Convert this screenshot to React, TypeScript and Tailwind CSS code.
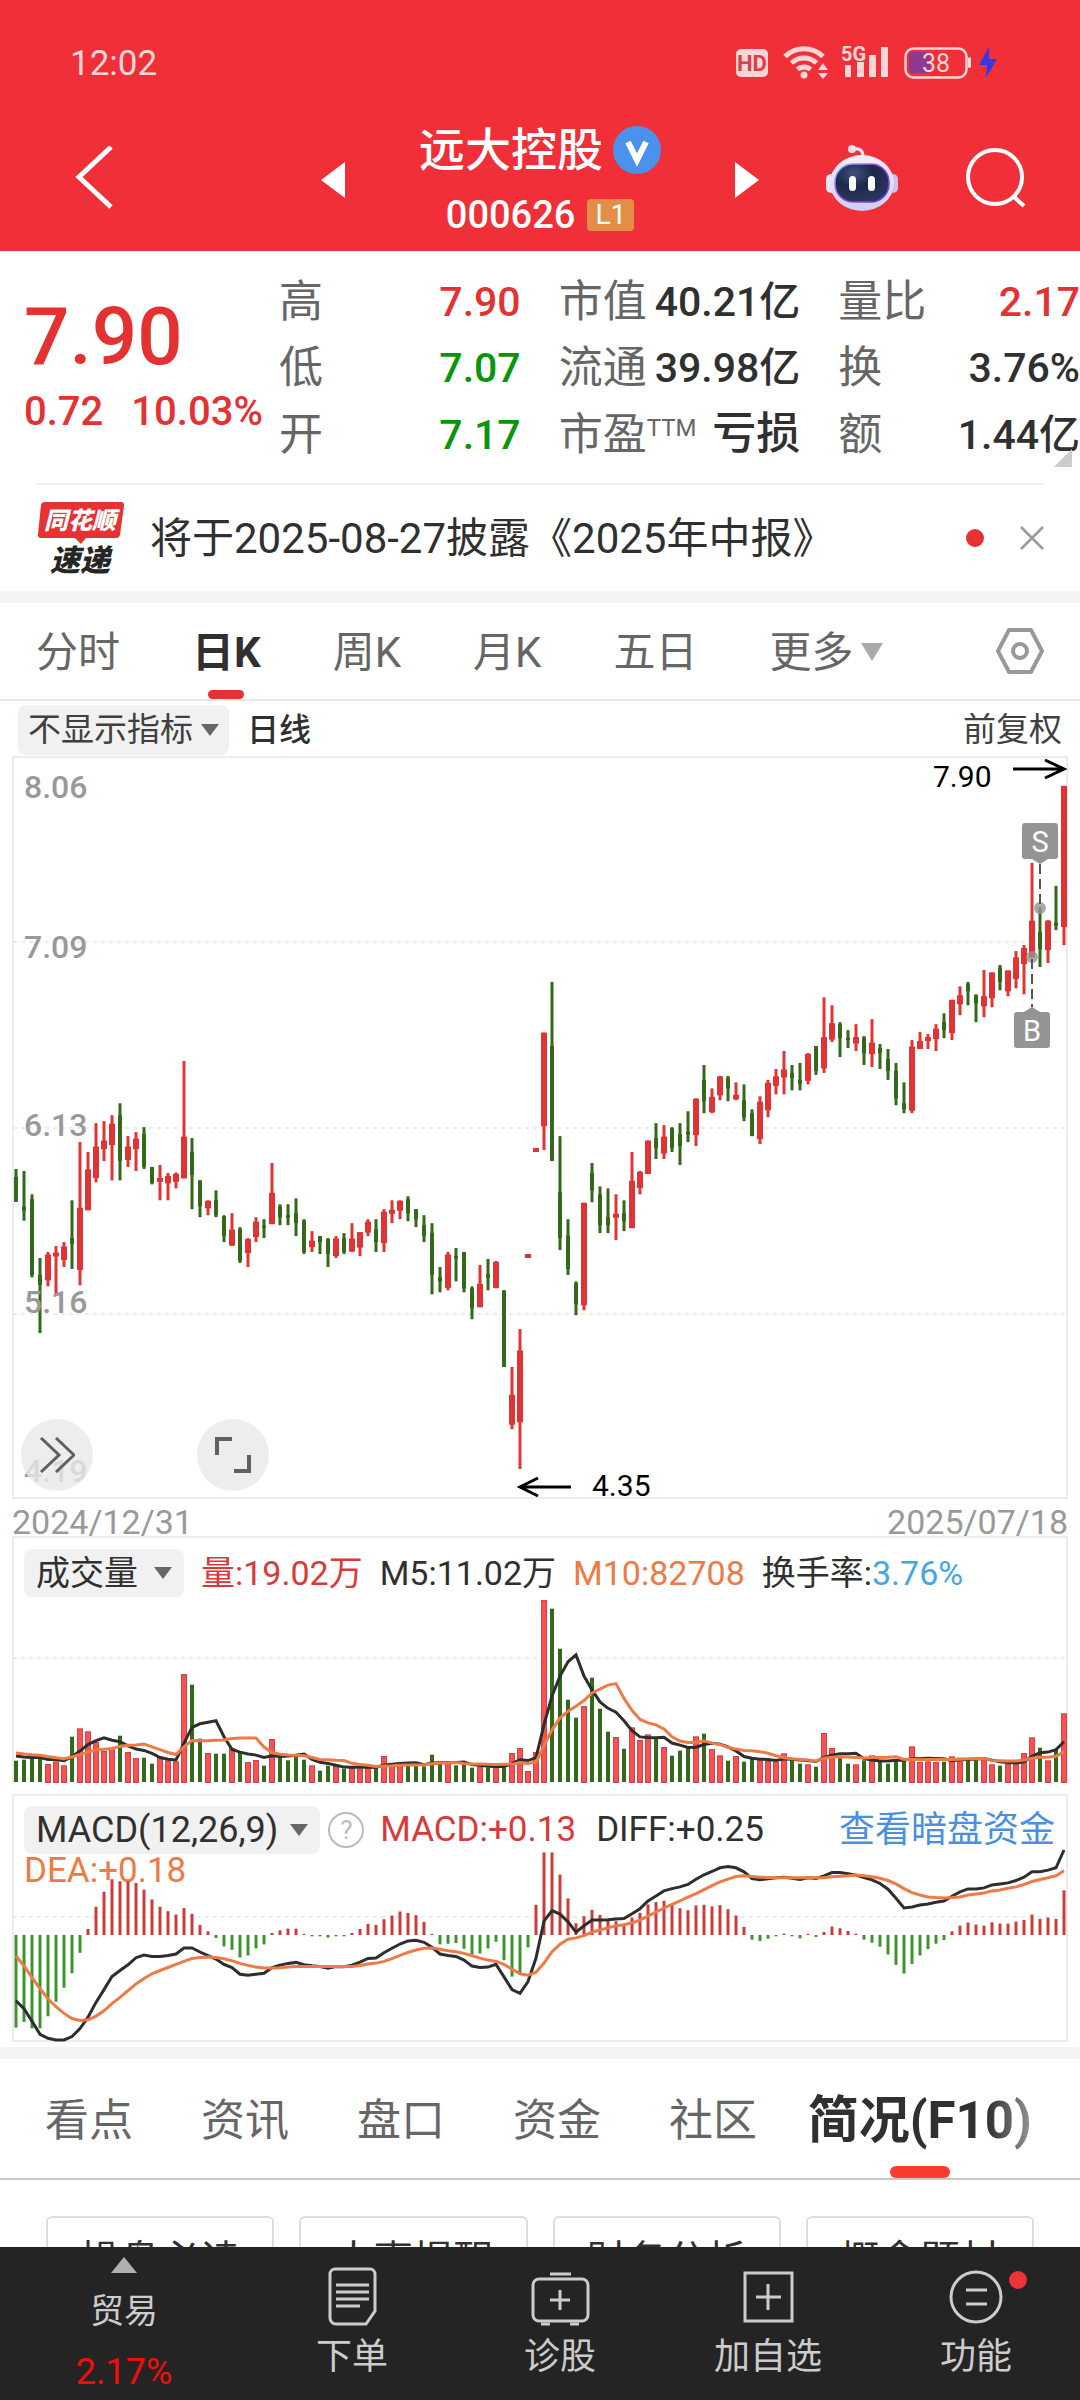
import type { ReactNode } from "react";

// [up, high, bodyTop, bodyBottom, low], measured down from the top of the plot
type Candle = [number, number, number, number, number];

const candles: Candle[] = [
  [0, 862, 878, 928, 928], [0, 866, 938, 946, 966], [0, 913, 923, 1075, 1080], [0, 1041, 1075, 1095, 1192],
  [1, 1029, 1034, 1086, 1098], [1, 1017, 1030, 1038, 1113], [1, 1009, 1018, 1045, 1059], [0, 925, 1001, 1013, 1063],
  [1, 808, 940, 1065, 1096], [1, 828, 863, 945, 945], [1, 770, 817, 880, 889], [1, 766, 805, 822, 846],
  [1, 754, 771, 814, 885], [0, 730, 754, 846, 885], [1, 796, 817, 844, 858], [1, 788, 801, 822, 866],
  [0, 778, 792, 858, 862], [0, 858, 858, 890, 893], [1, 854, 880, 888, 925], [1, 870, 876, 891, 925],
  [1, 869, 872, 888, 901], [1, 645, 797, 881, 881], [0, 800, 828, 874, 943], [0, 885, 885, 937, 959],
  [1, 925, 926, 941, 955], [0, 905, 925, 955, 959], [0, 955, 957, 997, 1009], [1, 951, 984, 1016, 1017],
  [0, 979, 983, 1047, 1051], [1, 1001, 1003, 1031, 1059], [1, 959, 968, 999, 1009], [0, 963, 976, 980, 1001],
  [1, 850, 910, 973, 973], [0, 933, 937, 959, 975], [0, 933, 955, 960, 975], [0, 921, 951, 971, 997],
  [0, 963, 966, 1029, 1033], [1, 987, 1006, 1019, 1029], [0, 997, 997, 1009, 1033], [0, 1001, 1003, 1033, 1059],
  [1, 997, 1002, 1037, 1041], [0, 991, 1001, 1029, 1033], [1, 971, 1002, 1028, 1029], [1, 989, 989, 1020, 1037],
  [1, 963, 968, 990, 997], [0, 963, 983, 1009, 1029], [1, 943, 948, 1011, 1029], [1, 925, 944, 952, 971],
  [1, 925, 926, 946, 963], [0, 917, 923, 951, 967], [0, 943, 943, 963, 979], [0, 955, 975, 997, 1009],
  [0, 971, 990, 1075, 1114], [0, 1059, 1080, 1088, 1110], [1, 1029, 1034, 1101, 1106], [0, 1021, 1037, 1042, 1088],
  [0, 1029, 1029, 1102, 1110], [0, 1098, 1102, 1142, 1164], [1, 1055, 1093, 1140, 1140], [0, 1043, 1074, 1081, 1106],
  [1, 1047, 1049, 1101, 1102], [0, 1106, 1106, 1260, 1260], [1, 1260, 1316, 1376, 1385], [1, 1184, 1227, 1371, 1465],
  [1, 1033, 1033, 1041, 1041], [1, 820, 820, 828, 828], [1, 588, 588, 776, 824], [0, 486, 615, 846, 846],
  [0, 796, 909, 1001, 1025], [0, 963, 996, 1063, 1075], [0, 1088, 1092, 1134, 1156], [1, 930, 930, 1136, 1146],
  [0, 850, 870, 905, 929], [0, 897, 913, 975, 991], [0, 901, 959, 975, 991], [1, 913, 952, 960, 1005],
  [0, 925, 951, 967, 987], [1, 828, 886, 981, 981], [1, 866, 868, 900, 913], [1, 805, 805, 872, 872],
  [0, 770, 800, 820, 842], [1, 774, 797, 831, 842], [0, 778, 780, 820, 828], [0, 770, 792, 816, 854],
  [0, 746, 787, 793, 808], [1, 720, 721, 794, 816], [0, 653, 683, 726, 750], [1, 700, 717, 748, 750],
  [1, 675, 676, 714, 724], [0, 675, 679, 700, 726], [1, 688, 713, 722, 724], [0, 692, 724, 758, 766],
  [0, 742, 750, 796, 796], [1, 716, 727, 802, 812], [1, 683, 689, 744, 758], [1, 661, 676, 695, 712],
  [1, 625, 662, 678, 712], [0, 653, 669, 679, 704], [0, 649, 683, 691, 704], [1, 629, 631, 685, 692],
  [0, 615, 615, 665, 673], [1, 517, 597, 660, 669], [1, 533, 569, 602, 607], [0, 567, 571, 599, 637],
  [0, 583, 598, 603, 619], [1, 571, 597, 610, 625], [0, 595, 598, 629, 653], [1, 561, 608, 631, 657],
  [0, 611, 619, 629, 661], [0, 621, 641, 665, 683], [0, 649, 665, 720, 734], [0, 688, 730, 742, 750],
  [1, 603, 616, 745, 750], [1, 587, 605, 621, 621], [1, 591, 597, 605, 621], [1, 571, 580, 601, 625],
  [0, 549, 567, 583, 599], [1, 522, 522, 589, 603], [1, 495, 513, 531, 553], [0, 486, 490, 505, 533],
  [0, 511, 513, 529, 567], [1, 462, 515, 535, 557], [1, 467, 467, 519, 537], [0, 452, 457, 486, 503],
  [1, 463, 463, 505, 515], [1, 424, 437, 480, 499], [1, 412, 418, 450, 511], [1, 247, 363, 437, 437],
  [0, 336, 386, 420, 456], [1, 362, 363, 422, 448], [0, 293, 367, 373, 382], [1, 92, 92, 376, 412],
];

const volumes = [
  64, 67, 75, 79, 54, 62, 50, 136, 161, 152, 120, 93, 100, 139, 90, 72, 73, 55, 77, 65, 62, 324, 292, 130, 87, 85, 85,
  102, 90, 60, 66, 49, 129, 79, 65, 79, 67, 50, 34, 49, 50, 40, 47, 40, 45, 47, 78, 57, 52, 52, 50, 47, 82, 57, 57, 50,
  54, 43, 47, 43, 47, 52, 87, 102, 33, 90, 546, 520, 400, 247, 193, 228, 313, 220, 151, 135, 100, 164, 126, 143, 132,
  105, 79, 94, 107, 137, 145, 99, 80, 64, 78, 61, 72, 65, 63, 61, 86, 67, 55, 53, 46, 147, 102, 75, 55, 53, 65, 80, 62,
  55, 64, 64, 107, 60, 62, 60, 61, 77, 73, 67, 67, 69, 53, 49, 55, 59, 87, 134, 103, 65, 97, 206,
];
const earlierVolumes = [96, 96, 96, 96, 96, 82, 82, 81, 81];

const macd = [
  -276, -259, -278, -278, -242, -199, -157, -114, -53, 18, 84, 129, 166, 160, 160, 155, 135, 106, 84, 71, 61, 80, 63,
  30, 11, -9, -34, -44, -67, -61, -40, -28, 6, 14, 19, 19, 3, -4, -4, -8, -4, -4, 6, 18, 33, 30, 47, 58, 70, 66, 59, 39,
  3, -28, -26, -24, -41, -58, -55, -40, -20, -75, -124, -113, -37, 90, 246, 246, 180, 109, 35, 56, 75, 60, 47, 41, 32,
  52, 66, 91, 98, 102, 89, 80, 74, 88, 90, 85, 89, 77, 58, 24, -14, -18, -11, -4, 4, -4, -10, 3, -6, 9, 25, 20, 12, 4,
  -14, -23, -35, -58, -89, -115, -86, -61, -42, -26, -15, 11, 28, 37, 31, 28, 38, 34, 34, 40, 45, 61, 48, 52, 48, 133,
];

const diff = [
  657, 681, 718, 757, 769, 774, 774, 764, 740, 706, 662, 624, 585, 567, 550, 529, 521, 525, 525, 522, 518, 500, 500,
  512, 523, 533, 549, 558, 578, 581, 578, 575, 558, 551, 546, 543, 550, 553, 555, 560, 555, 556, 551, 542, 531, 530,
  514, 501, 488, 479, 477, 483, 498, 518, 522, 525, 536, 554, 558, 557, 549, 586, 624, 635, 600, 530, 420, 389, 399,
  422, 453, 434, 417, 417, 416, 414, 412, 398, 383, 360, 345, 330, 323, 318, 311, 295, 282, 272, 261, 257, 261, 273,
  293, 297, 294, 291, 289, 292, 296, 291, 293, 285, 275, 275, 279, 283, 290, 297, 308, 325, 352, 381, 378, 372, 369,
  364, 360, 346, 333, 324, 324, 321, 312, 309, 306, 299, 289, 273, 273, 268, 261, 208,
];

const dea = [
  524, 553, 588, 621, 652, 675, 695, 710, 716, 714, 703, 687, 666, 647, 627, 607, 591, 577, 567, 558, 549, 540, 531,
  528, 527, 528, 532, 538, 546, 552, 557, 560, 560, 559, 557, 555, 555, 555, 555, 555, 555, 555, 555, 552, 548, 545,
  540, 532, 522, 513, 506, 501, 500, 504, 508, 511, 516, 523, 530, 536, 540, 549, 563, 577, 581, 572, 545, 511, 489,
  474, 470, 463, 453, 446, 440, 434, 431, 425, 417, 405, 393, 381, 370, 360, 348, 338, 326, 314, 303, 295, 287, 285,
  287, 289, 290, 291, 291, 291, 291, 291, 291, 291, 288, 286, 285, 283, 285, 288, 292, 299, 309, 323, 335, 342, 348,
  350, 351, 350, 348, 342, 339, 336, 330, 327, 322, 318, 311, 302, 296, 291, 285, 270,
];

const RED = "#e03434";
const GREEN = "#33691a";
const ORANGE = "#ee7a45";

const xAt = (i: number) => 3 + i * 8;
const priceY = (v: number) => (v - 36) / 2.01;
const macdY = (v: number) => (v - 220) / 2.979;
const toPoints = (ys: number[]) => ys.map((y, i) => `${xAt(i)},${y.toFixed(1)}`).join(" ");

function movingAverage(days: number) {
  const all = [...earlierVolumes, ...volumes];
  return volumes.map((_, i) => {
    const end = i + earlierVolumes.length + 1;
    return all.slice(end - days, end).reduce((sum, v) => sum + v, 0) / days;
  });
}

function GridLine({ y }: { y: number }) {
  return <line x1="0" x2="1054" y1={y} y2={y} stroke="#ececec" strokeWidth="2" strokeDasharray="4 4" />;
}

function Caret({ className = "" }: { className?: string }) {
  return (
    <svg className={`h-3 w-[18px] ${className}`} viewBox="0 0 18 12" aria-hidden="true">
      <path d="M0 0h18L9 12z" fill="currentColor" />
    </svg>
  );
}

function StatusBar() {
  return (
    <div className="flex h-[119px] items-center justify-between pt-2 pr-[82px] pl-[70px] text-[#fcd6d6]">
      <span className="text-[35px] leading-10">12:02</span>
      <svg className="h-10 w-[262px] overflow-visible" viewBox="0 0 262 40" fill="currentColor" aria-hidden="true">
        <rect x="0" y="5" width="32" height="28" rx="5" />
        <text x="16" y="27" fontSize="22" fontWeight="700" textAnchor="middle" fill="#d8404a">HD</text>
        <g fill="none" stroke="currentColor" strokeWidth="5">
          <path d="M49 12.5a27 27 0 0 1 38 0" />
          <path d="M55.5 19a18 18 0 0 1 25 0" />
          <path d="M61.5 25.5a9.500 9.500 0 0 1 13 0" />
        </g>
        <circle cx="68" cy="31" r="3.500" />
        <path d="M82 26l5-7 5 7zM82 29h10l-5 6z" />
        <text x="105" y="17" fontSize="20" fontWeight="700">5G</text>
        <path d="M109 21h6v12h-6zM121 18h7v15h-7zM133 11h7v22h-7zM145 3h7v30h-7z" />
        <rect x="173" y="8" width="21" height="21" rx="4" fill="#8e3a91" />
        <rect x="169.500" y="4.500" width="61" height="29" rx="8" fill="none" stroke="currentColor" strokeWidth="2.500" />
        <rect x="232" y="13" width="3" height="11" rx="1.500" />
        <text x="200" y="28" fontSize="25" textAnchor="middle">38</text>
        <path d="M253 3l-10 18h8l-1 13 11-19h-8z" fill="#2f3bea" />
      </svg>
    </div>
  );
}

function Robot() {
  return (
    <svg className="h-[68px] w-[72px]" viewBox="0 0 72 68" aria-hidden="true">
      <defs>
        <linearGradient id="shell" x1="0" y1="0" x2="0" y2="1">
          <stop offset="0" stopColor="#f4f0fb" />
          <stop offset="1" stopColor="#cfcdf3" />
        </linearGradient>
        <linearGradient id="rim" x1="0" y1="0" x2="1" y2="1">
          <stop offset="0" stopColor="#6fd0f5" />
          <stop offset="0.400" stopColor="#b04be0" />
          <stop offset="1" stopColor="#5b3fe8" />
        </linearGradient>
        <radialGradient id="face" cx="0.350" cy="0.250" r="0.800">
          <stop offset="0" stopColor="#41507a" />
          <stop offset="0.450" stopColor="#1c2949" />
          <stop offset="1" stopColor="#2c3760" />
        </radialGradient>
      </defs>
      <path d="M27 5c6-1 10 1 10 7" fill="none" stroke="#efe6f5" strokeWidth="3" />
      <circle cx="26" cy="5" r="4" fill="#f6dfe8" />
      <rect x="0" y="30" width="10" height="19" rx="5" fill="#e9e4f7" />
      <rect x="62" y="30" width="10" height="19" rx="5" fill="#c9c3ee" />
      <ellipse cx="36" cy="39" rx="32" ry="28" fill="url(#shell)" />
      <rect x="9" y="20" width="54" height="38" rx="18" fill="url(#face)" stroke="url(#rim)" strokeWidth="1.500" />
      <rect x="23" y="32" width="7" height="15" rx="3.500" fill="#fff" />
      <rect x="42" y="32" width="7" height="15" rx="3.500" fill="#fff" />
    </svg>
  );
}

function TitleBar() {
  return (
    <div className="grid grid-cols-[1fr_auto_1fr] items-center pb-[2px]">
      <button aria-label="返回" className="ml-[75px] w-10 justify-self-start pb-3">
        <svg className="h-16 w-10" viewBox="0 0 40 64" fill="none" stroke="#fff" strokeWidth="5">
          <path d="M36 1L4 31l32 30" />
        </svg>
      </button>
      <div className="flex w-[438px] items-center justify-between">
        <button aria-label="上一只" className="pb-2">
          <svg className="h-9 w-6" viewBox="0 0 24 36" fill="#fff"><path d="M24 0v36L0 18z" /></svg>
        </button>
        <div className="flex flex-col items-center text-white">
          <h1 className="flex items-center gap-[10px] text-[46px] leading-[62px] font-medium">
            远大控股
            <svg className="size-12" viewBox="0 0 48 48" aria-hidden="true">
              <circle cx="24" cy="24" r="24" fill="#4a92ec" />
              <path d="M15 16l9 18 9-18" fill="none" stroke="#fff" strokeWidth="6" />
            </svg>
          </h1>
          <p className="flex items-center gap-3 text-[38px] leading-[68px] font-medium">
            000626
            <span className="rounded-sm bg-[#e38e47] px-2 text-[28px] leading-8 font-normal">L1</span>
          </p>
        </div>
        <button aria-label="下一只" className="pb-2">
          <svg className="h-9 w-6" viewBox="0 0 24 36" fill="#fff"><path d="M0 0v36l24-18z" /></svg>
        </button>
      </div>
      <div className="flex items-center gap-[68px] justify-self-end pr-[52px] pb-3">
        <button aria-label="智能助手"><Robot /></button>
        <button aria-label="搜索">
          <svg className="h-[62px] w-[62px]" viewBox="0 0 62 62" fill="none" stroke="#fff" strokeWidth="4">
            <circle cx="29" cy="30" r="27" />
            <path d="M47 49l11 10" />
          </svg>
        </button>
      </div>
    </div>
  );
}

function Stat({ label, children, tone = "text-[#303030]" }: { label: ReactNode; children: ReactNode; tone?: string }) {
  return (
    <div className="flex items-center justify-between leading-[66px] whitespace-nowrap">
      <dt className="text-[44px] text-[#666]">{label}</dt>
      <dd className={`text-[41px] font-medium ${tone}`}>{children}</dd>
    </div>
  );
}

function Quote() {
  return (
    <section className="relative flex h-[232px] pt-[18px]">
      <div className="w-[279px] pt-5 pl-6 text-[#e43232]">
        <p className="text-[80px] leading-[96px] font-medium">7.90</p>
        <p className="flex gap-7 pt-[2px] text-[40px] leading-[50px] font-medium">
          <span>0.72</span>
          <span>10.03%</span>
        </p>
      </div>
      <dl className="grid flex-1 grid-cols-3 content-start gap-x-[38px]">
        <Stat label="高" tone="text-[#e43232]">7.90</Stat>
        <Stat label="市值">40.21亿</Stat>
        <Stat label="量比" tone="text-[#e43232]">2.17</Stat>
        <Stat label="低" tone="text-[#0a960a]">7.07</Stat>
        <Stat label="流通">39.98亿</Stat>
        <Stat label="换">3.76%</Stat>
        <Stat label="开" tone="text-[#0a960a]">7.17</Stat>
        <Stat label={<>市盈<sup className="top-[-14px] text-2xl">TTM</sup></>}><span className="text-[44px]">亏损</span></Stat>
        <Stat label="额">1.44亿</Stat>
      </dl>
      <svg className="absolute right-2 bottom-4 size-[18px]" viewBox="0 0 18 18" aria-hidden="true">
        <path d="M18 0v18H0z" fill="#ccc" />
      </svg>
    </section>
  );
}

function News() {
  return (
    <section className="mx-9 flex h-[108px] items-center border-t-2 border-[#f0f0f0]">
      <svg className="h-[74px] w-[90px] shrink-0 overflow-visible" viewBox="0 0 90 74" role="img" aria-label="同花顺速递">
        <path d="M9 1h76a3 3 0 0 1 3 4l-4 29a4 4 0 0 1-4 3H50l-5 6-6-6H5a3 3 0 0 1-3-4L5 4a4 4 0 0 1 4-3z" fill="#e63232" />
        <text x="44" y="28" fontSize="24" fontWeight="900" fontStyle="italic" textAnchor="middle" fill="#fff">同花顺</text>
        <text x="44" y="70" fontSize="30" fontWeight="900" fontStyle="italic" textAnchor="middle" fill="#262626">速递</text>
      </svg>
      <a href="#news" className="ml-6 flex-1 text-[42px] text-[#303030]">将于2025-08-27披露《2025年中报》</a>
      <span className="size-[18px] rounded-full bg-[#e93030]" />
      <button aria-label="关闭" className="ml-9">
        <svg className="size-6" viewBox="0 0 24 24" stroke="#999" strokeWidth="2.500"><path d="M1 1l22 22M23 1L1 23" /></svg>
      </button>
    </section>
  );
}

function PeriodTabs() {
  return (
    <nav className="flex h-[98px] items-center gap-[72px] border-b-2 border-[#e8e8e8] px-9 text-[42px] text-[#666]">
      <button className="pt-[2px]">分时</button>
      <button className="relative h-full pt-[2px] font-bold text-[#303030]">
        日K
        <span className="absolute inset-x-0 bottom-0 mx-auto h-[9px] w-9 rounded-full bg-[#e93030]" />
      </button>
      <button className="pt-[2px]">周K</button>
      <button className="pt-[2px]">月K</button>
      <button className="pt-[2px]">五日</button>
      <button className="flex items-center gap-2 pt-[2px]">
        更多
        <svg className="h-[18px] w-[22px] text-[#aaa]" viewBox="0 0 22 18"><path d="M0 0h22L11 18z" fill="currentColor" /></svg>
      </button>
      <button aria-label="设置" className="ml-auto">
        <svg className="h-[46px] w-12" viewBox="0 0 48 46" fill="none" stroke="#999" strokeWidth="4" strokeLinejoin="round">
          <path d="M13 2h22l11 21-11 21H13L2 23z" />
          <circle cx="24" cy="23" r="7" />
        </svg>
      </button>
    </nav>
  );
}

function CandleChart() {
  return (
    <div className="relative mx-3 border-2 border-[#ececec]">
      <svg className="block w-full overflow-visible" viewBox="1 0 1052 739" role="img" aria-label="日K线图">
        <GridLine y={184} />
        <GridLine y={370} />
        <GridLine y={556} />
        {candles.map(([up, high, top, bottom, low], i) => {
          const color = up ? RED : GREEN;
          const w = up ? 6 : 4;
          return (
            <g key={i} fill={color}>
              <rect x={xAt(i) - 1.5} y={priceY(high)} width="3" height={(low - high) / 2.01} />
              <rect x={xAt(i) - w / 2} y={priceY(top)} width={w} height={Math.max(2, (bottom - top) / 2.01)} />
            </g>
          );
        })}
        <g fill="#999" fontSize="32" fontWeight="500">
          <text x="11" y="40">8.06</text>
          <text x="11" y="200">7.09</text>
          <text x="11" y="378">6.13</text>
          <text x="11" y="555">5.16</text>
          <text x="11" y="724">4.19</text>
        </g>
        <g fill="#949494" fillOpacity="0.800">
          <circle cx="1027" cy="150" r="6" />
          <circle cx="1019" cy="199" r="6" />
        </g>
        <g fill="none" stroke="#555" strokeWidth="2" strokeDasharray="10 5">
          <path d="M1027 106v44M1019 201v48" />
        </g>
        <path d="M1012 65h30a3 3 0 0 1 3 3v30a3 3 0 0 1-3 3h-7l-8 5-8-5h-7a3 3 0 0 1-3-3V68a3 3 0 0 1 3-3z" fill="#949494" />
        <path d="M1004 254h7l8-5 8 5h7a3 3 0 0 1 3 3v30a3 3 0 0 1-3 3h-30a3 3 0 0 1-3-3v-30a3 3 0 0 1 3-3z" fill="#949494" />
        <g fill="#fff" fontSize="29" textAnchor="middle">
          <text x="1027" y="94">S</text>
          <text x="1019" y="283">B</text>
        </g>
        <g fontSize="30">
          <text x="920" y="29">7.90</text>
          <text x="579" y="738">4.35</text>
        </g>
        <g fill="none" stroke="#000" strokeWidth="3">
          <path d="M1000 11h51M1032 2l19 9-19 9" />
          <path d="M558 729h-51M525 720l-18 9 18 9" />
        </g>
      </svg>
      <button aria-label="展开" className="absolute bottom-[6px] left-[7px] flex size-[72px] items-center justify-center rounded-full bg-[#e8e8e8]/80">
        <svg className="h-9 w-9" viewBox="0 0 36 36" fill="none" stroke="#606060" strokeWidth="3"><path d="M2 1l18 17L2 35M17 1l18 17-18 17" /></svg>
      </button>
      <button aria-label="全屏" className="absolute bottom-[6px] left-[183px] flex size-[72px] items-center justify-center rounded-full bg-[#e8e8e8]/80">
        <svg className="h-9 w-9" viewBox="0 0 36 36" fill="none" stroke="#606060" strokeWidth="4"><path d="M2 18V2h15M19 34h15V18" /></svg>
      </button>
    </div>
  );
}

function VolumeChart() {
  const m5 = movingAverage(5).map((v) => 184 - v / 3);
  const m10 = movingAverage(10).map((v) => 184 - v / 3);
  return (
    <section className="mx-3 border-2 border-b-0 border-[#ececec] text-[34px]">
      <div className="flex h-[60px] items-center gap-[17px] pt-[9px] pl-[10px] leading-[48px]">
        <button className="flex items-center gap-4 rounded-lg bg-[#f1f1f1] px-3 text-[#303030]">
          成交量 <Caret className="text-[#666]" />
        </button>
        <span className="text-[#d83a3a]">量:19.02万</span>
        <span className="text-[#303030]">M5:11.02万</span>
        <span className="text-[#ee7a45]">M10:82708</span>
        <span className="text-[#303030]">
          换手率:<span className="text-[#43a7e6]">3.76%</span>
        </span>
      </div>
      <svg className="block w-full overflow-visible" viewBox="1 0 1052 184" role="img" aria-label="成交量图">
        <GridLine y={60} />
        {volumes.map((v, i) =>
          candles[i][0] ? (
            <rect key={i} x={xAt(i) - 2.5} y={184.5 - v / 3} width="5" height={v / 3} fill="#fa5050" stroke="#cf4444" />
          ) : (
            <rect key={i} x={xAt(i) - 2} y={184 - v / 3} width="4" height={v / 3} fill={GREEN} />
          ),
        )}
        <polyline points={toPoints(m5)} fill="none" stroke="#2e2e2e" strokeWidth="3" />
        <polyline points={toPoints(m10)} fill="none" stroke={ORANGE} strokeWidth="3" />
      </svg>
    </section>
  );
}

function MacdChart() {
  return (
    <section className="relative mx-3 mt-3 mb-[5px] border-2 border-[#ececec] text-[35px]">
      <div className="flex h-[58px] items-center pt-[10px] pr-[11px] pl-[10px] leading-[48px]">
        <button className="flex items-center gap-3 rounded-lg bg-[#f1f1f1] px-3 text-[36px] text-[#303030]">
          MACD(12,26,9) <Caret className="text-[#666]" />
        </button>
        <button aria-label="指标说明" className="ml-2 flex size-9 items-center justify-center rounded-full border-2 border-[#bbb] text-[26px] text-[#bbb]">
          ?
        </button>
        <span className="ml-4 text-[#d83a3a]">MACD:+0.13</span>
        <span className="ml-5 text-[#303030]">DIFF:+0.25</span>
        <a href="#funds" className="ml-auto text-[36px] text-[#4a8fe0]">查看暗盘资金</a>
      </div>
      <span className="absolute top-[55px] left-[10px] leading-10 text-[#ee7a45]">DEA:+0.18</span>
      <svg className="relative block w-full overflow-visible" viewBox="1 0 1052 186" role="img" aria-label="MACD图">
        <GridLine y={63} />
        {macd.map((v, i) => (
          <rect
            key={i}
            x={xAt(i) - 1.5}
            y={v > 0 ? 81 - v / 2.979 : 81}
            width="3"
            height={Math.abs(v) / 2.979}
            fill={v > 0 ? "#cb3c3c" : "#3c962c"}
          />
        ))}
        <polyline points={toPoints(diff.map(macdY))} fill="none" stroke="#2e2e2e" strokeWidth="3" />
        <polyline points={toPoints(dea.map(macdY))} fill="none" stroke={ORANGE} strokeWidth="3" />
      </svg>
    </section>
  );
}

function InfoTabs() {
  return (
    <nav className="flex h-[121px] items-center justify-between border-b-2 border-[#c8c8c8] pr-[48px] pl-[45px] text-[44px] text-[#666]">
      <div className="flex gap-[68px] pt-1">
        <button>看点</button>
        <button>资讯</button>
        <button>盘口</button>
        <button>资金</button>
        <button>社区</button>
      </div>
      <button className="relative h-full pt-[6px] text-[51px] font-bold">
        <span className="bg-linear-to-r from-[#303030] from-80% to-[#999] bg-clip-text text-transparent">简况(F10)</span>
        <span className="absolute inset-x-0 bottom-0 mx-auto h-3 w-[60px] rounded-full bg-[#fb3a30]" />
      </button>
    </nav>
  );
}

function NavItem({ label, dot, children }: { label: string; dot?: boolean; children: ReactNode }) {
  return (
    <button className="relative flex flex-1 flex-col items-center pt-5">
      <svg className="h-[60px] w-[60px]" viewBox="0 0 60 60" fill="none" stroke="#ccc" strokeWidth="3" aria-hidden="true">
        {children}
      </svg>
      <span className="pt-[5px] text-[36px] leading-[50px]">{label}</span>
      {dot && <span className="absolute top-[24px] left-1/2 ml-[33px] size-[18px] rounded-full bg-[#ee3434]" />}
    </button>
  );
}

function BottomNav() {
  return (
    <nav className="flex h-[153px] shrink-0 bg-[#242424] text-[#ccc]">
      <button className="flex w-[248px] flex-col items-center pt-[10px]">
        <svg className="h-4 w-[26px]" viewBox="0 0 26 16" aria-hidden="true"><path d="M13 0l13 16H0z" fill="#b0b0b0" /></svg>
        <span className="pt-[13px] text-[34px] leading-[50px]">贸易</span>
        <span className="pt-[12px] text-[36px] leading-[48px] text-[#f20d0d]">2.17%</span>
      </button>
      <NavItem label="下单">
        <path d="M13 2h35a5 5 0 0 1 5 5v37l-9 13H14a6 6 0 0 1-6-6V7a5 5 0 0 1 5-5z" />
        <path d="M14 18h33M14 25h33M14 32h33M14 39h24" />
      </NavItem>
      <NavItem label="诊股">
        <rect x="3" y="12" width="55" height="42" rx="6" />
        <path d="M20 7h21M30 23v20M20 33h20M11 57h9M40 57h9" />
      </NavItem>
      <NavItem label="加自选">
        <rect x="7" y="6" width="47" height="48" />
        <path d="M30 17v26M18 30h25" />
      </NavItem>
      <NavItem label="功能" dot>
        <circle cx="30" cy="30" r="25" />
        <path d="M20 23h21M20 37h21" />
      </NavItem>
    </nav>
  );
}

const cards = ["操盘必读", "大事提醒", "财务分析", "概念题材"];

export default function App() {
  return (
    <div className="flex h-screen flex-col overflow-hidden bg-white [font-family:Roboto,'Noto_Sans_CJK_SC',sans-serif]">
      <header className="shrink-0 bg-[#f12f38]">
        <StatusBar />
        <TitleBar />
      </header>

      <main className="min-h-0 flex-1 overflow-hidden">
        <Quote />
        <News />
        <div className="h-3 bg-[#f4f4f4]" />
        <PeriodTabs />

        <div className="flex items-center px-[18px] pt-1 pb-px text-[33px] leading-[50px] text-[#404040]">
          <button className="flex items-center gap-2 rounded-lg bg-[#f1f1f1] px-[10px]">
            不显示指标 <Caret className="text-[#666]" />
          </button>
          <span className="ml-[18px] text-[32px] font-medium text-[#303030]">日线</span>
          <button className="ml-auto">前复权</button>
        </div>
        <CandleChart />
        <div className="flex justify-between px-3 pt-[9px] text-[34px] leading-7 text-[#999]">
          <span>2024/12/31</span>
          <span>2025/07/18</span>
        </div>
        <VolumeChart />
        <MacdChart />

        <div className="h-3 bg-[#f4f4f4]" />
        <InfoTabs />
        <div className="grid grid-cols-4 gap-[25px] px-[46px] pt-9">
          {cards.map((card) => (
            <a key={card} href="#f10" className="rounded-md border-2 border-[#ddd] py-[15px] text-center text-[40px] leading-[56px] text-[#303030]">
              {card}
            </a>
          ))}
        </div>
      </main>

      <BottomNav />
    </div>
  );
}
